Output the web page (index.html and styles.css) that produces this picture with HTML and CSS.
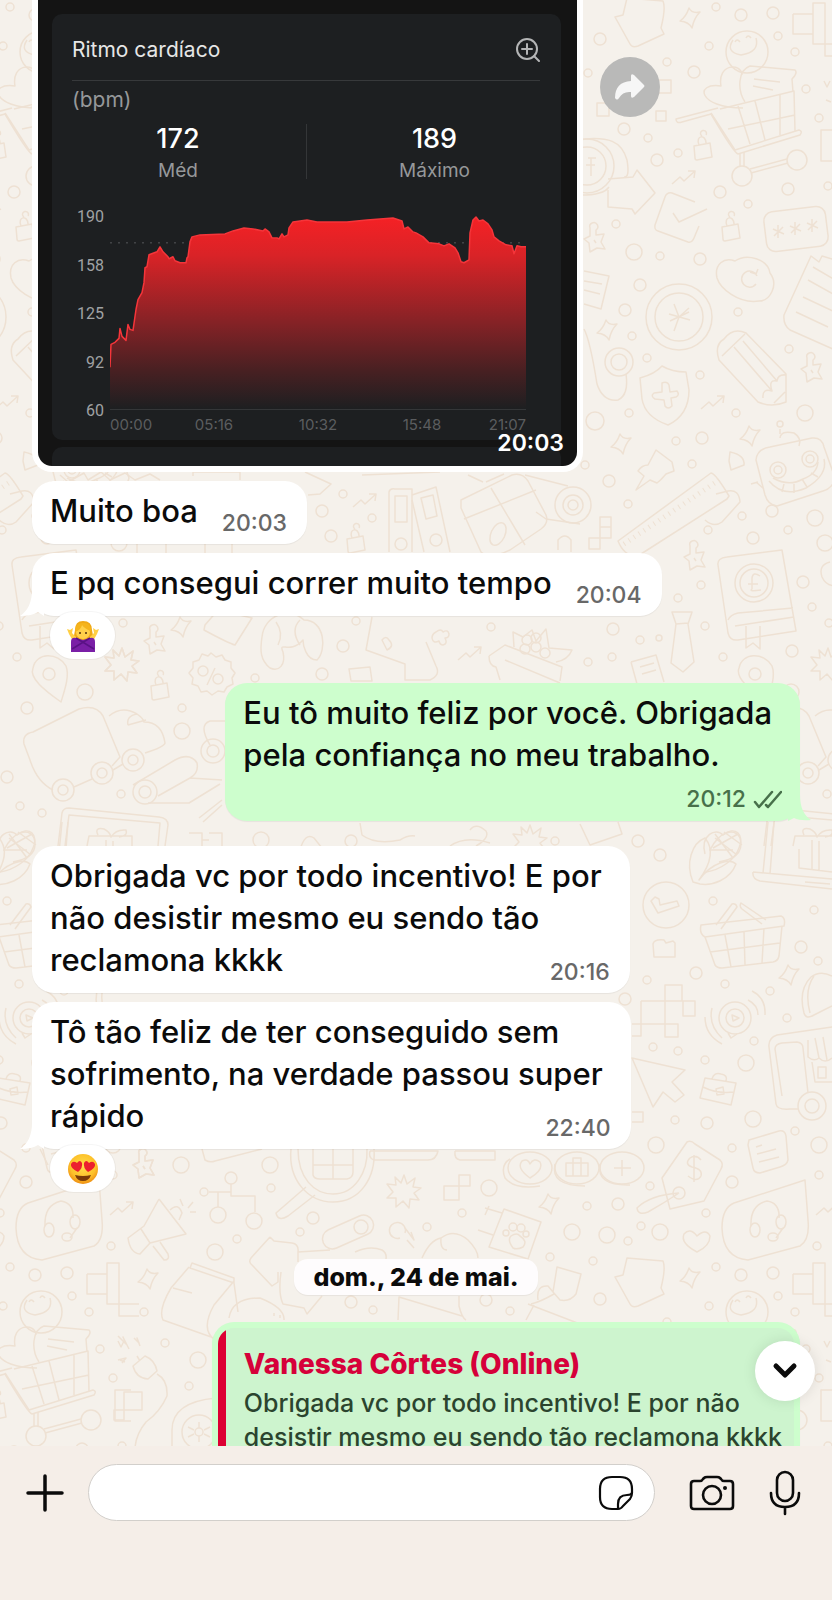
FILE: index.html
```html
<!DOCTYPE html>
<html lang="pt-BR">

<head>
    <meta charset="UTF-8" />
    <meta name="viewport" content="width=device-width, initial-scale=1" />
    <title>Conversa</title>
    <link rel="stylesheet" href="styles.css">
</head>

<body>
    <main class="chat">
        <!-- Wallpaper doodles, one tile repeated every 706 x 1260 -->
        <svg class="wallpaper" aria-hidden="true">
            <defs>
                <path id="spark" d="M-1-10Q2-4 10-6Q4 0 2 10Q-1 4-10 3Q-4-1-1-10Z" />
                <path id="lock" d="M-9-3L7-6L9 8L-6 11Q-8 11-8 9ZM-4-4C-8-14 3-15 3-6M-1-13a3 3 0 1 1 4-1" />
                <path id="zig" d="M-12 7L-4 0L0 4L11-6M4-6L11-6L10 1" />
                <path id="burst" d="M0-17L3-8L11-14L9-5L17-4L10 1L15 8L6 7L5 16L-1 9L-8 15L-8 6L-17 6L-11 0L-17-8L-8-7L-9-15L-3-9Z" />
                <path id="pawn" d="M-4-12a4 4 0 1 1 6 2L2-5L10-6L7 2L11 9L3 8L-4 12L-5 3L-10-1L-4-4ZM0 0L2 3" />
                <g id="tile">
                    <g class="dots">
                        <circle cx="716" cy="7" r="4" /><circle cx="741" cy="15" r="6" /><circle cx="773" cy="13" r="6" />
                        <circle cx="600" cy="39" r="6" /><circle cx="709" cy="46" r="4" /><circle cx="778" cy="36" r="4" />
                        <circle cx="795" cy="52" r="4" /><circle cx="667" cy="62" r="4" /><circle cx="694" cy="72" r="6" />
                        <circle cx="588" cy="73" r="4" /><circle cx="806" cy="89" r="4" /><circle cx="819" cy="118" r="4" />
                        <circle cx="624" cy="129" r="6" /><circle cx="648" cy="138" r="4" /><circle cx="678" cy="153" r="4" />
                        <circle cx="657" cy="160" r="6" /><circle cx="720" cy="192" r="6" /><circle cx="788" cy="189" r="6" />
                        <circle cx="828" cy="186" r="4" /><circle cx="748" cy="204" r="4" /><circle cx="616" cy="224" r="4" />
                        <circle cx="634" cy="252" r="8" /><circle cx="660" cy="256" r="4" /><circle cx="700" cy="259" r="6" />
                        <circle cx="640" cy="285" r="6" /><circle cx="625" cy="310" r="6" /><circle cx="738" cy="312" r="4" />
                        <circle cx="632" cy="336" r="4" /><circle cx="647" cy="358" r="4" /><circle cx="789" cy="349" r="4" />
                        <circle cx="700" cy="375" r="4" /><circle cx="629" cy="413" r="4" /><circle cx="736" cy="413" r="4" />
                        <circle cx="595" cy="421" r="9" /><circle cx="805" cy="413" r="8" /><circle cx="676" cy="441" r="4" />
                        <circle cx="702" cy="438" r="6" /><circle cx="692" cy="464" r="4" /><circle cx="585" cy="465" r="4" />
                        <circle cx="609" cy="481" r="6" /><circle cx="628" cy="504" r="4" /><circle cx="708" cy="530" r="4" />
                        <circle cx="742" cy="516" r="4" /><circle cx="753" cy="538" r="6" /><circle cx="788" cy="530" r="4" />
                        <circle cx="772" cy="511" r="6" /><circle cx="815" cy="518" r="8" /><circle cx="825" cy="543" r="8" />
                        <circle cx="803" cy="582" r="6" /><circle cx="812" cy="607" r="4" /><circle cx="829" cy="623" r="4" />
                        <circle cx="701" cy="585" r="4" /><circle cx="678" cy="598" r="4" /><circle cx="705" cy="626" r="4" />
                        <circle cx="640" cy="640" r="4" /><circle cx="659" cy="638" r="3" /><circle cx="613" cy="629" r="6" />
                        <circle cx="612" cy="657" r="4" /><circle cx="588" cy="662" r="4" /><circle cx="491" cy="627" r="4" />
                        <circle cx="792" cy="651" r="6" /><circle cx="723" cy="657" r="4" /><circle cx="733" cy="708" r="6" />
                        <circle cx="791" cy="692" r="8" /><circle cx="827" cy="794" r="4" /><circle cx="726" cy="806" r="4" />
                        <circle cx="748" cy="813" r="4" /><circle cx="713" cy="777" r="6" /><circle cx="343" cy="494" r="4" />
                        <circle cx="322" cy="511" r="6" /><circle cx="372" cy="518" r="4" /><circle cx="331" cy="536" r="6" />
                        <circle cx="182" cy="708" r="4" /><circle cx="182" cy="731" r="8" /><circle cx="255" cy="678" r="4" />
                        <circle cx="322" cy="674" r="6" /><circle cx="343" cy="646" r="6" /><circle cx="356" cy="621" r="4" />
                        <circle cx="261" cy="840" r="8" /><circle cx="351" cy="841" r="6" /><circle cx="555" cy="841" r="4" />
                        <circle cx="638" cy="841" r="6" /><circle cx="660" cy="855" r="6" /><circle cx="713" cy="901" r="4" />
                        <circle cx="814" cy="910" r="4" /><circle cx="801" cy="947" r="6" /><circle cx="818" cy="961" r="4" />
                        <circle cx="696" cy="973" r="6" /><circle cx="647" cy="980" r="4" /><circle cx="725" cy="984" r="4" />
                        <circle cx="770" cy="991" r="4" /><circle cx="787" cy="1018" r="4" /><circle cx="754" cy="1041" r="4" />
                        <circle cx="625" cy="999" r="6" /><circle cx="653" cy="1047" r="4" /><circle cx="678" cy="1051" r="4" />
                        <circle cx="705" cy="1060" r="4" /><circle cx="746" cy="1063" r="8" /><circle cx="707" cy="1123" r="6" />
                        <circle cx="753" cy="1119" r="8" /><circle cx="675" cy="1120" r="4" /><circle cx="656" cy="1145" r="8" />
                        <circle cx="732" cy="1148" r="4" /><circle cx="732" cy="1182" r="6" /><circle cx="795" cy="1131" r="4" />
                        <circle cx="819" cy="1145" r="8" /><circle cx="819" cy="1175" r="4" /><circle cx="650" cy="1186" r="4" />
                        <circle cx="489" cy="1188" r="8" /><circle cx="462" cy="1213" r="4" /><circle cx="587" cy="1206" r="4" />
                        <circle cx="618" cy="1204" r="6" /><circle cx="706" cy="1213" r="4" /><circle cx="181" cy="1165" r="8" />
                        <circle cx="270" cy="1165" r="8" /><circle cx="231" cy="1178" r="6" /><circle cx="271" cy="1188" r="4" />
                        <circle cx="218" cy="1215" r="8" /><circle cx="254" cy="1221" r="8" /><circle cx="313" cy="1218" r="6" />
                        <circle cx="204" cy="1192" r="4" /><circle cx="215" cy="1252" r="8" /><circle cx="237" cy="1239" r="4" />
                        <circle cx="300" cy="1232" r="4" /><circle cx="427" cy="1227" r="4" /><circle cx="572" cy="1232" r="8" />
                        <circle cx="607" cy="1235" r="8" /><circle cx="660" cy="1232" r="8" /><circle cx="628" cy="1241" r="4" />
                        <circle cx="641" cy="1226" r="4" /><circle cx="550" cy="1257" r="4" /><circle cx="593" cy="1261" r="4" />
                        <circle cx="817" cy="1246" r="4" /><circle cx="144" cy="1312" r="4" /><circle cx="165" cy="1343" r="4" />
                        <circle cx="198" cy="1360" r="8" /><circle cx="189" cy="1386" r="4" /><circle cx="351" cy="1302" r="6" />
                        <circle cx="373" cy="1310" r="4" /><circle cx="486" cy="1300" r="6" /><circle cx="510" cy="1311" r="4" />
                    </g>
                    <use href="#spark" x="690" y="18" /><use href="#spark" x="607" y="330" /><use href="#spark" x="621" y="444" />
                    <use href="#spark" x="750" y="436" /><use href="#spark" x="181" y="627" /><use href="#spark" x="789" y="975" />
                    <use href="#spark" x="549" y="1204" /><use href="#spark" x="148" y="1279" />
                    <use href="#lock" x="703" y="149" /><use href="#lock" x="731" y="230" /><use href="#lock" x="160" y="689" />
                    <use href="#lock" x="356" y="542" />
                    <use href="#zig" x="684" y="177" /><use href="#zig" x="713" y="402" /><use href="#zig" x="470" y="653" />
                    <use href="#zig" x="365" y="500" /><use href="#zig" x="828" y="1208" />
                    <use href="#burst" x="122" y="665" /><use href="#burst" x="828" y="665" />
                    <use href="#burst" x="404" y="1192" /><use href="#burst" x="530" y="842" />
                    <use href="#pawn" x="811" y="370" /><use href="#pawn" x="594" y="240" /><use href="#pawn" x="694" y="558" />
                    <use href="#pawn" x="154" y="642" /><use href="#pawn" x="143" y="1166" /><use href="#pawn" x="849" y="1166" />

                    <!-- arrows, blocks and the shopping cart -->
                    <path d="M627-2L663 1Q666 8 661 28L664 34L638 46Q632 48 630 44L615 17L623 15Z" />
                    <path d="M793 14H813V3H825V15M793 14V34H813V14M813 34V44H845M825 15V44V56H845" />
                    <circle cx="747" cy="52" r="21" /><path d="M733 40Q725 52 741 55Q760 52 756 38M735 42q2-4 5 0M746 38q2-4 5 0" />
                    <path d="M743 108C698 108 694 82 721 86C717 64 741 62 742 75M745 102C737 90 738 70 750 66L795 70Q798 73 792 79L793 92M754 79L780 82M753 86L773 90" />
                    <path d="M711 113L735 150M720 109L794 91L795 131M728 129L795 115M738 106L750 144M755 101L765 140M780 95V135" />
                    <path d="M735 150L799 130Q803 131 800 135L738 154Q734 153 711 114L682 122Q676 124 676 119L718 108" />
                    <path d="M740 153V167M744 152V167M751 173L788 163M750 169L787 159" /><circle cx="797" cy="160" r="10" /><circle cx="742" cy="176" r="10" />
                    <path d="M824 81l3 6l3-6M826 100l5 2M837 130H821V161H837M653 80H671V93H655M597 103H609V116H597ZM656 111H666V121H656Z" />
                    <path d="M575 140C610 135 622 142 627 160Q630 178 624 177M575 195C600 196 607 190 609 187" /><circle cx="587" cy="166" r="19" /><circle cx="587" cy="166" r="27" /><path d="M588 158h8M586 165h9M591 158v18" />
                    <path d="M608 190V207L632 209L635 214L655 193L637 170L633 177L608 179" />
                    <path d="M695 202L672 193Q667 192 665 197L655 225Q654 230 658 231L688 242Q692 243 694 238L699 226M673 213L679 222L707 209" />

                    <!-- password card, cloud, notes -->
                    <rect x="765" y="209" width="62" height="40" rx="9" transform="rotate(-7 796 229)" />
                    <path d="M778 225v13M773 229l11 5M783 227l-9 9M795 222v13M790 226l11 5M800 224l-9 9M812 219v13M807 223l11 5M817 221l-9 9" />
                    <path d="M717 278C714 264 724 257 735 261C747 253 768 259 770 273C779 285 770 301 759 301C738 304 720 288 717 278Z" /><path d="M757 276a8 8 0 1 0-1 8M750 272l6 2l2-5" />
                    <path d="M835 260L822 256L819 262L811 256L784 315Q783 325 790 330L835 350M813 267L835 280M808 280L835 295M803 297L835 312M796 312L828 327" />
                    <circle cx="679" cy="317" r="33" /><circle cx="679" cy="317" r="24" /><path d="M674 304L679 317L674 331M679 317L689 308M669 314L690 320M670 321L689 312" />
                    <path d="M584 271L609 276L601 309L584 304M584 281L602 284M584 290L600 294" />
                    <path d="M584 329Q590 340 597 384Q603 402 618 400Q629 395 626 374" /><circle cx="619" cy="362" r="14" /><circle cx="619" cy="362" r="8" />
                    <path d="M640 378Q655 374 662 366Q672 372 686 372L689 390Q689 415 668 425Q645 417 642 399Z" />
                    <path d="M662 383Q667 381 669 385L670 392L677 391Q680 395 676 397L671 398L672 406Q668 410 665 406L664 400L655 399Q650 396 654 393L662 392Z" />
                    <path d="M719 360Q714 345 724 339Q733 327 746 333L786 374V402Q772 408 758 402ZM722 356L745 334M734 347L772 391M743 341L777 381M763 398Q762 388 772 391Q768 379 777 381Q778 374 786 375M774 403L785 392" />
                    <path d="M729 461l1-9q15 3 14 13l-13 5Z" />

                    <!-- robot, pin and ruler -->
                    <path d="M780 438Q781 430 794 433Q802 438 799 446M780 429V434" /><circle cx="780" cy="424" r="3" />
                    <path d="M756 460Q757 449 770 447L812 438Q822 437 824 447L835 478Q833 488 823 491L777 506Q768 505 765 495ZM756 482L764 489M751 484L758 482" />
                    <circle cx="778" cy="470" r="8" /><circle cx="778" cy="470" r="4" /><circle cx="810" cy="459" r="8" /><circle cx="810" cy="459" r="4" />
                    <path d="M769 481Q783 498 806 488Q828 475 824 459M773 478Q789 487 803 479Q817 474 818 462M782 492l2-8M794 493v-9M807 487l-5-8M818 477l-7-4" />
                    <path d="M656 450L672 462L674 471L666 474Q661 480 657 483L650 480L636 490L644 476L638 471Q642 465 648 465Z" />
                    <path d="M618 541L711 473Q716 474 729 496L727 499L641 554Q626 560 618 541Z" /><path d="M624 544L719 480" stroke-dasharray="1 5" stroke-width="5" />

                    <!-- cabinet, gift and tape -->
                    <path d="M389 552V492Q390 488 395 489H412V552M395 496H407V522H395Z" /><circle cx="401" cy="544" r="6" />
                    <path d="M412 495L436 487L450 552M421 498L433 495L437 516L426 519ZM412 500L424 552" /><circle cx="436" cy="540" r="6" />
                    <path d="M461 500L512 475Q522 472 528 481L546 515Q549 523 541 529L510 550Q490 560 481 552L461 508ZM464 519L536 490M491 488L525 545M483 482L468 475M486 482L504 474" />
                    <ellipse cx="498" cy="534" rx="7" ry="12" transform="rotate(25 498 534)" />
                    <circle cx="573" cy="505" r="18" /><circle cx="573" cy="505" r="10" /><circle cx="573" cy="505" r="5" /><path d="M525 475L568 486M536 512L546 519L580 524" />
                    <path d="M600 517H611V538H600ZM589 538H600V549H589ZM600 527H611M558 550V540Q565 532 571 540V552" />
                    <path d="M193 476V472H240V480M60 475L68 482L84 473L88 480L101 472L110 480L125 473L135 480L150 474L160 480M305 472L331 484L320 494L308 495M362 475L440 472" />
                    <path d="M716 494L728 491Q739 489 740 502L722 522Q714 528 705 520M137 540V558M166 540V558M205 540V558M232 540V558" />

                    <!-- pound book, tie, eyeglass -->
                    <path d="M718 565Q717 558 727 557L782 550L796 631L738 640Q730 641 728 633ZM728 620Q730 615 738 613L793 608M735 626L794 617M746 626V648L753 643L760 649V626" />
                    <circle cx="754" cy="583" r="19" /><circle cx="754" cy="583" r="14" /><path d="M760 576q-7-5-8 2v11q-4 3 9 1M748 584h10" />
                    <path d="M672 612H692L688 624L694 662L683 672L671 663L676 624ZM676 624L688 623" />
                    <path d="M830 562Q818 565 822 577Q826 586 836 586" />
                    <path d="M631 662L656 655L664 682M631 662L637 684M640 667L654 663M642 674L656 670" />

                    <!-- percent, croissant, fruit -->
                    <path d="M205 625L218 610L252 618L235 645Q228 643 204 630Z" />
                    <path d="M262 637C264 615 290 606 304 620C325 620 327 650 317 660C306 660 303 645 303 640C290 655 278 640 283 652C286 665 279 672 270 668C260 660 260 650 262 637ZM276 622Q284 633 278 645M300 620Q290 630 300 645" />
                    <path d="M211 653l5 4l6-2l3 5l6 2l0 6l4 5l-3 5l1 6l-6 3l-3 5l-6-1l-6 4l-5-4l-6 1l-3-6l-6-2l1-6l-4-5l4-5l0-6l6-2l3-6l6 2Z" /><circle cx="203" cy="671" r="5" /><circle cx="218" cy="679" r="5" /><path d="M215 668L207 685" />
                    <path d="M372 617L366 650L405 664V680H430Q441 675 436 666L426 642" /><path d="M349 669L370 667L372 681H351ZM382 640q4-5 7 0q6 6-2 10Z" />
                    <path d="M436 632q5-4 7 0q5-3 6 2q0 4-4 4q3 6-2 7q-3 0-4-4q-6 3-7-3q0-4 4-6Z" />
                    <path d="M489 656L505 645L562 667L560 681M489 656Q489 666 496 667L500 680M505 660L560 683M514 647L513 632L523 637L532 630L536 641L546 629L549 648L572 650Q568 660 556 662" />
                    <circle cx="527" cy="640" r="5" /><circle cx="536" cy="647" r="5" /><circle cx="545" cy="653" r="5" /><circle cx="536" cy="638" r="5" /><circle cx="525" cy="649" r="5" />

                    <!-- location pin, truck, laptop -->
                    <path d="M767 702C750 690 735 678 739 668C742 652 764 652 772 666C776 676 770 692 767 702Z" /><circle cx="755" cy="674" r="6" />
                    <path d="M759 790Q743 782 736 760L730 744Q728 734 739 732L785 709Q802 704 809 716L826 757L818 766M780 787L798 779M819 770L829 764" />
                    <circle cx="769" cy="790" r="11" /><circle cx="769" cy="790" r="5" /><circle cx="808" cy="773" r="11" /><circle cx="808" cy="773" r="5" /><circle cx="839" cy="760" r="11" /><circle cx="839" cy="760" r="5" />
                    <path d="M815 716Q828 705 843 714M834 725Q832 716 843 714Q849 718 850 722Q868 722 871 743Q870 747 851 753M834 725L852 720" />
                    <circle cx="145" cy="792" r="12" /><circle cx="145" cy="792" r="6" /><circle cx="213" cy="751" r="12" /><circle cx="213" cy="751" r="6" />
                    <path d="M133 785L175 760Q190 752 197 763Q199 773 190 778L158 796M148 803H189L220 784M190 778L222 780M199 818L222 800M203 822L222 805" />
                    <path d="M210 745Q198 725 210 721H225" />
                    <path d="M764 846L768 813Q769 808 775 808L865 817Q874 818 874 825L871 846M771 846L775 815L866 823L864 846M793 846L795 836H838V846M804 835Q800 827 810 829Q816 832 817 837Q822 829 832 830Q834 836 825 837" />
                    <path d="M705 854C700 835 716 827 723 835C735 825 745 835 739 848C735 860 720 870 706 872M709 850L733 850M715 834L733 858" />
                    <path d="M189 833H202V848M209 833H222V848M202 840H209M360 823L362 835Q375 845 400 840Q408 835 415 836M300 850Q305 832 314 838L322 848M470 830Q476 822 486 831Q490 838 476 846M450 846Q465 835 490 843" />
                    <path d="M580 824L590 845L622 834L618 822" />

                    <!-- corn, laptop gift, check, basket -->
                    <path d="M693 882C685 863 692 843 705 838C715 850 710 865 699 880C712 862 730 858 736 864C730 880 712 886 700 884ZM710 850C720 830 735 828 740 838C745 855 730 860 719 862M715 838L737 855M724 832L742 845M713 848L738 834" />
                    <path d="M768 822L763 873M774 822L770 874M753 872L832 879M753 872Q752 879 760 881L832 889M805 882L830 884" />
                    <path d="M799 849V868L832 872M812 840V869M819 841V870" />
                    <circle cx="666" cy="905" r="23" /><path d="M651 901L655 897L659 899L660 905L677 901L679 906L658 913Z" />
                    <path d="M653 944Q654 939 664 940L666 943L673 941L675 943V957L654 957Z" />
                    <path d="M701 925L781 916Q786 918 784 926L705 937Q699 934 701 925ZM705 937L715 965Q717 968 722 968L773 962Q778 961 779 956L782 926M725 935L731 967M744 932L745 965M764 928L762 963M710 952L780 943" />
                    <path d="M716 925L732 904Q736 903 737 907L721 929M766 920L741 903Q739 906 742 909L762 924" />

                    <!-- cursor, speaker, case, van -->
                    <path d="M641 1001H682V985H665V1024M682 985V1001H695V1016H683V1001M641 1001V1024H678V1037H665V1024M632 1024H641V1036H632" />
                    <path d="M632 1058L685 1070L672 1082L684 1095L675 1102L663 1092L653 1107ZM632 1112H643V1122H632" />
                    <circle cx="735" cy="1018" r="16" /><circle cx="735" cy="1018" r="9" /><path d="M732 1015L739 1018L733 1021ZM728 1033L731 1038L737 1034M712 1008Q708 1025 722 1038M705 1017Q705 1035 722 1044M748 1000Q758 1005 758 1015M752 991Q766 998 765 1015" />
                    <path d="M705 1078L736 1083L731 1105L700 1098ZM703 1087Q717 1094 734 1092M712 1079Q714 1072 721 1074Q728 1075 726 1081M716 1089L723 1087L724 1094L717 1095Z" />
                    <path d="M832 976Q820 970 811 977Q798 990 804 1013Q806 1020 814 1015L832 1006M814 976Q804 990 810 1013" />
                    <path d="M832 1027L777 1035Q768 1038 769 1047L776 1104Q777 1110 790 1109H798M775 1049Q775 1044 782 1043L797 1042Q803 1043 803 1048L808 1093M775 1049L782 1096M808 1040V1057Q814 1062 819 1058Q825 1064 832 1058M815 1038L819 1058M823 1037L827 1060M812 1062L815 1082H832M818 1067H826V1078H818Z" />
                    <circle cx="812" cy="1106" r="14" /><circle cx="812" cy="1106" r="7" />
                    <path d="M749 1140L779 1131Q785 1130 786 1136L788 1160Q787 1165 780 1167L760 1173Q754 1173 753 1168L748 1145ZM756 1147L762 1145M757 1154L776 1149M759 1162L779 1157" />

                    <!-- price tag, reactions, headset -->
                    <path d="M687 1142Q691 1140 695 1144L720 1160Q724 1164 721 1169L704 1201L670 1209L662 1178Z" /><circle cx="679" cy="1193" r="6" /><path d="M701 1160q-5-6-11-2q-6 6 2 9q11 2 9 9q-4 7-13 0M694 1155v27M679 1193Q650 1195 637 1208Q638 1216 648 1212Q664 1203 679 1193" />
                    <ellipse cx="530" cy="1168" rx="22" ry="16" /><path d="M510 1159Q500 1165 505 1178Q515 1190 540 1186M530 1178Q516 1168 522 1161Q528 1158 530 1164Q534 1157 540 1162Q544 1170 530 1178Z" />
                    <ellipse cx="577" cy="1168" rx="22" ry="16" /><path d="M555 1164Q550 1186 585 1186M566 1163H588V1176H566ZM573 1163V1158H581V1163M573 1163V1176M581 1163V1176" />
                    <ellipse cx="622" cy="1168" rx="22" ry="16" /><path d="M600 1164Q596 1186 630 1185M622 1160V1176M614 1168H631" />
                    <path d="M370 1151H438Q436 1161 426 1160H374Q368 1158 370 1151M455 1151H495V1160H460Q454 1159 455 1151" />
                    <path d="M444 1186H459V1200H444ZM459 1175H470V1186H459ZM459 1186V1175" />
                    <path d="M805 1180L734 1203Q722 1208 722 1228Q723 1258 748 1260L800 1246Q810 1240 808 1220ZM751 1226Q750 1205 767 1201Q780 1203 779 1218" />
                    <ellipse cx="755" cy="1230" rx="5" ry="7" /><ellipse cx="781" cy="1222" rx="5" ry="7" /><ellipse cx="773" cy="1237" rx="5" ry="4" /><path d="M783 1228L776 1238" />

                    <!-- magnifier, tree nodes, megaphone -->
                    <path d="M291 1149C288 1180 308 1202 333 1202C360 1202 376 1178 374 1149M298 1149C298 1178 314 1194 333 1194C355 1194 368 1172 367 1149M306 1187L276 1213Q278 1222 288 1216L315 1195M313 1149V1175Q314 1179 320 1179H347Q353 1178 353 1172V1149M313 1165H353M333 1149V1179" />
                    <path d="M202 1149L205 1160Q210 1163 215 1161L262 1149M40 1149L48 1165M231 1184V1196H255V1212M209 1192H231M218 1192V1207" />
                    <path d="M159 1199L186 1234L150 1243M159 1199L144 1226L128 1238Q130 1253 140 1254L150 1243L141 1229M153 1246L164 1260Q170 1260 168 1254L160 1242M170 1210Q178 1202 182 1213L179 1220M180 1199L183 1206M193 1202L188 1208M190 1212H196" />
                    <rect x="321" y="1222" width="54" height="20" rx="10" transform="rotate(-24 348 1232)" /><circle cx="361" cy="1227" r="7" />
                    <path d="M270 1237L274 1241L292 1243Q299 1244 298 1252V1262M270 1237L251 1258Q248 1262 252 1265L272 1286L278 1282V1272M355 1252Q370 1245 382 1250Q387 1253 386 1259M298 1252L330 1250" />
                    <path d="M405 1228L414 1240L411 1232M400 1238a8 8 0 1 1 5-5M407 1240L414 1248M422 1258Q430 1240 441 1238Q454 1228 468 1240Q478 1250 478 1258M441 1238Q440 1250 447 1250" />
                    <path d="M504 1209L541 1222L528 1259L489 1247ZM502 1213L485 1208M489 1206L485 1215M493 1235L478 1230" /><path d="M513 1248q-6-8-2-12q6-4 9 0q8 5 3 11q-6 3-10 1Z" /><circle cx="506" cy="1233" r="3" /><circle cx="513" cy="1227" r="4" /><circle cx="521" cy="1228" r="4" /><circle cx="526" cy="1234" r="3" />
                    <path d="M697 1252Q680 1243 684 1234Q690 1227 697 1236Q706 1228 710 1236Q710 1246 697 1252Z" />

                    <!-- bottom strip -->
                    <path d="M192 1263L234 1278V1283L190 1268ZM189 1267L171 1288Q158 1310 163 1320L214 1338M173 1288L192 1293M234 1281L214 1305Q200 1330 215 1340M234 1283L238 1312" />
                    <path d="M229 1318Q232 1298 260 1298Q285 1308 284 1320M274 1313v3M280 1315v3M281 1272Q278 1294 283 1304L304 1308L307 1314L322 1296" />
                    <path d="M118 1336l8 8l-3-7l6 12M134 1338l5 5l-2-5l3 8M118 1360l8-2l-4 5M133 1366L145 1356Q155 1360 157 1371L148 1379Q136 1378 133 1366ZM137 1356L140 1361M157 1374Q168 1380 167 1396Q160 1412 146 1422Q136 1434 135 1448M124 1392H142V1410H124ZM114 1410H124V1420H114Z" />
                    <path d="M216 1398Q172 1402 172 1430V1446" /><circle cx="199" cy="1432" r="17" /><circle cx="199" cy="1432" r="4" /><path d="M199 1422v6M199 1436v6M188 1427l6 3M204 1434l6 3M210 1427l-6 3M194 1434l-6 3" />
                    <path d="M557 1267L581 1274L576 1294Q570 1302 560 1300L553 1292ZM554 1294Q540 1302 531 1304M538 1300Q536 1285 548 1286L553 1292M528 1304L580 1324M526 1320L534 1305M459 1296V1306Q462 1318 466 1320M398 1320L399 1297L462 1316" />
                </g>
            </defs>
            <use href="#tile" /><use href="#tile" x="-706" /><use href="#tile" y="1260" /><use href="#tile" x="-706" y="1260" />
        </svg>

        <!-- Heart rate picture -->
        <section class="row">
            <figure class="photo">
                <div class="card">
                    <div class="card-head">
                        <h2>Ritmo cardíaco</h2>
                        <svg width="24" height="24" viewBox="0 0 24 24" fill="none" stroke="#b4b5b6" stroke-width="2" stroke-linecap="round">
                            <circle cx="11" cy="11" r="10" />
                            <path d="M18 18l5 5M6 11h10M11 6v10" />
                        </svg>
                    </div>
                    <p class="unit">(bpm)</p>
                    <div class="stats">
                        <div class="stat"><strong>172</strong><span>Méd</span></div>
                        <div class="stat"><strong>189</strong><span>Máximo</span></div>
                    </div>
                    <div class="chart">
                        <div class="y-axis"><span>190</span><span>158</span><span>125</span><span>92</span><span>60</span></div>
                        <div class="plot">
                            <svg viewBox="0 0 416 196" preserveAspectRatio="none">
                                <defs>
                                    <linearGradient id="heat" x1="0" y1="0" x2="0" y2="1">
                                        <stop offset="0" stop-color="#f52125" />
                                        <stop offset="0.2" stop-color="#d92327" />
                                        <stop offset="0.55" stop-color="#852226" />
                                        <stop offset="0.8" stop-color="#482022" />
                                        <stop offset="1" stop-color="#1d1f21" />
                                    </linearGradient>
                                </defs>
                                <path d="M0 29H416" stroke="#55585a" stroke-width="1" stroke-dasharray="2 6" />
                                <path fill="url(#heat)" d="M0 196V154L1 131L5 129L9 125L10 115L12 123L16 127L18 111L20 116L23 117L26 96L28 86L32 79L34 69L35 54L37 53L39 41L47 38L50 33L53 38L58 43L59 45L63 43L65 47L70 49L76 49L77 44L78 43L80 28L82 23L90 21L115 20L123 17L134 14L143 15L153 17L155 15L159 18L162 24L167 24L169 25L172 20L174 23L178 21L179 14L183 8L197 6L207 8L223 8L237 8L257 6L283 4L292 7L294 15L298 13L303 18L306 19L313 23L319 29L329 30L334 32L339 30L345 34L348 39L351 48L354 49L359 46L360 19L363 6L366 3L369 7L373 6L378 10L382 16L384 23L389 27L396 31L402 32L404 40L407 32L411 33L416 33V196Z" />
                                <path fill="none" stroke="#f5353a" stroke-width="1.5" stroke-linejoin="round" d="M0 154L1 131L5 129L9 125L10 115L12 123L16 127L18 111L20 116L23 117L26 96L28 86L32 79L34 69L35 54L37 53L39 41L47 38L50 33L53 38L58 43L59 45L63 43L65 47L70 49L76 49L77 44L78 43L80 28L82 23L90 21L115 20L123 17L134 14L143 15L153 17L155 15L159 18L162 24L167 24L169 25L172 20L174 23L178 21L179 14L183 8L197 6L207 8L223 8L237 8L257 6L283 4L292 7L294 15L298 13L303 18L306 19L313 23L319 29L329 30L334 32L339 30L345 34L348 39L351 48L354 49L359 46L360 19L363 6L366 3L369 7L373 6L378 10L382 16L384 23L389 27L396 31L402 32L404 40L407 32L411 33L416 33" />
                            </svg>
                            <div class="x-axis"><span>00:00</span><span>05:16</span><span>10:32</span><span>15:48</span><span>21:07</span></div>
                        </div>
                    </div>
                </div>
                <div class="card next"></div>
                <time class="photo-time">20:03</time>
            </figure>
            <button class="forward" type="button" aria-label="Encaminhar">
                <svg width="30" height="28" viewBox="0 0 30 28" fill="#f6f6f6">
                    <path d="M16 3Q16 0 19 2L29 12Q30 13 29 14L19 24Q16 26 16 23V19Q8 18 4 25Q2 28 0 25Q0 9 16 8Z" />
                </svg>
            </button>
        </section>

        <article class="bubble line">
            <p>Muito boa</p>
            <time>20:03</time>
        </article>

        <article class="bubble line">
            <svg class="tail-left" width="24" height="26" viewBox="0 0 24 26"><path fill="#fff" d="M12 0Q12 18 0 26Q12 26 18 22L24 26V0Z" /></svg>
            <p>E pq consegui correr muito tempo</p>
            <time>20:04</time>
        </article>
        <div class="reaction">
            <svg width="32" height="32" viewBox="0 0 32 32" role="img" aria-label="Mulher gesticulando não">
                <path fill="#f0a916" d="M8 10Q8 1 16 1Q25 1 25 10L27 21H6Z" />
                <path fill="#ffcf45" d="M3 10l-3-1l2 5l4 7l4-3l-5-5l1-5zM29 10l3-1l-2 5l-4 7l-4-3l5-5l-1-5z" />
                <circle cx="16" cy="12" r="7" fill="#ffd04a" />
                <path fill="#f5b41c" d="M8 12Q8 2 16 3Q24 2 24 11Q18 9 15 5Q14 10 8 12Z" />
                <circle cx="13" cy="13" r="1" fill="#53300c" /><circle cx="19" cy="13" r="1" fill="#53300c" />
                <path fill="#7a1fa6" d="M4 32V22Q4 17 9 18L16 20L23 18Q28 17 28 22V32Z" />
                <path fill="none" stroke="#5a1285" stroke-width="1.5" d="M5 29L23 18M27 29L9 18" />
            </svg>
        </div>

        <article class="bubble sent">
            <svg class="tail-right" width="24" height="26" viewBox="0 0 24 26"><path fill="#cdfecd" d="M12 0Q12 18 23 25Q12 26 6 23L0 26V0Z" /></svg>
            <p>Eu tô muito feliz por você. Obrigada<br>pela confiança no meu trabalho.</p>
            <div class="status">
                <time>20:12</time>
                <svg width="29" height="19" viewBox="0 0 29 19" fill="none" stroke="#47704a" stroke-width="2.5" stroke-linecap="round" stroke-linejoin="round">
                    <path d="M2 12L6 17L19 2M13 15L15 17L28 2" />
                </svg>
            </div>
        </article>

        <article class="bubble block">
            <p>Obrigada vc por todo incentivo! E por<br>não desistir mesmo eu sendo tão<br>reclamona kkkk</p>
            <time>20:16</time>
        </article>

        <article class="bubble block">
            <svg class="tail-left" width="24" height="26" viewBox="0 0 24 26"><path fill="#fff" d="M12 0Q12 18 0 26Q12 26 18 22L24 26V0Z" /></svg>
            <p>Tô tão feliz de ter conseguido sem<br>sofrimento, na verdade passou super<br>rápido</p>
            <time>22:40</time>
        </article>
        <div class="reaction">
            <svg width="32" height="32" viewBox="0 0 32 32" role="img" aria-label="Olhos de coração">
                <defs>
                    <radialGradient id="face" cx="0.5" cy="0.4" r="0.6">
                        <stop offset="0" stop-color="#ffe04a" />
                        <stop offset="0.7" stop-color="#fdc02a" />
                        <stop offset="1" stop-color="#ee8e12" />
                    </radialGradient>
                </defs>
                <circle cx="16" cy="16" r="15" fill="url(#face)" />
                <path fill="#ec1f2f" d="M11 19Q3 15 4 11Q6 7 10 10Q13 6 15 10Q16 15 11 19ZM21 19Q29 15 28 11Q26 7 22 10Q19 6 17 10Q16 15 21 19Z" />
                <path fill="#7a3b08" d="M8 22Q16 24 24 22Q22 28 16 28Q10 28 8 22Z" />
            </svg>
        </div>

        <div class="date">dom., 24 de mai.</div>

        <article class="bubble sent reply">
            <blockquote class="quote">
                <h3>Vanessa Côrtes (Online)</h3>
                <p>Obrigada vc por todo incentivo! E por não<br>desistir mesmo eu sendo tão reclamona kkkk</p>
            </blockquote>
        </article>

        <button class="to-bottom" type="button" aria-label="Ir para o fim">
            <svg width="26" height="18" viewBox="0 0 26 18" fill="none" stroke="#0b0b0b" stroke-width="5" stroke-linecap="round" stroke-linejoin="round">
                <path d="M4 4L13 13L22 4" />
            </svg>
        </button>
    </main>

    <!-- Message composer -->
    <footer class="composer">
        <button class="icon" type="button" aria-label="Anexar">
            <svg width="38" height="38" viewBox="0 0 38 38" stroke="#0b0b0b" stroke-width="3.5" stroke-linecap="round"><path d="M19 2V36M2 19H36" /></svg>
        </button>
        <div class="field">
            <input type="text" aria-label="Mensagem">
            <button class="icon" type="button" aria-label="Figurinhas">
                <svg width="36" height="36" viewBox="0 0 36 36" fill="none" stroke="#0b0b0b" stroke-width="2.2" stroke-linejoin="round">
                    <path d="M21 34H14Q2 34 2 22V14Q2 2 14 2H22Q34 2 34 14V18Q34 21 32 24L25 31Q23 34 20 34V29Q20 20 29 20Q34 20 34 17" />
                </svg>
            </button>
        </div>
        <button class="icon camera" type="button" aria-label="Câmera">
            <svg width="46" height="36" viewBox="0 0 46 36" fill="none" stroke="#0b0b0b" stroke-width="2.6" stroke-linejoin="round">
                <path d="M5 6H11Q13 6 14 4L15 3Q16 2 18 2H28Q30 2 31 3L32 4Q33 6 35 6H41Q44 6 44 9V31Q44 34 41 34H5Q2 34 2 31V9Q2 6 5 6Z" />
                <circle cx="23" cy="20" r="9" /><circle cx="36" cy="13" r="2" fill="#0b0b0b" stroke="none" />
            </svg>
        </button>
        <button class="icon" type="button" aria-label="Gravar áudio">
            <svg width="32" height="46" viewBox="0 0 32 46" fill="none" stroke="#0b0b0b" stroke-width="2.6" stroke-linecap="round">
                <rect x="8" y="2" width="16" height="29" rx="8" />
                <path d="M2 23Q2 37 16 37Q30 37 30 23M16 37V44" />
            </svg>
        </button>
    </footer>
</body>

</html>
```
FILE: styles.css
```css
/* Reset & Global Styles */
* {
    margin: 0;
    padding: 0;
    box-sizing: border-box;
}

body {
    display: flex;
    flex-direction: column;
    height: 100vh;
    background: #f5efe9;
    color: #0b0b0b;
    font-family: Inter, "Liberation Sans", sans-serif;
}

button {
    border: none;
    background: none;
    cursor: pointer;
}

svg {
    display: block;
}

/* Chat area */
.chat {
    position: relative;
    flex: 1;
    min-height: 0;
    overflow: hidden;
    display: flex;
    flex-direction: column;
    align-items: flex-start;
    padding: 0 32px;
    background: #f5f1eb;
}

.chat > * {
    flex-shrink: 0;
}

.wallpaper {
    position: absolute;
    inset: 0;
    width: 100%;
    height: 100%;
    fill: none;
    stroke: #eee1d3;
    stroke-width: 1.5;
    stroke-linejoin: round;
}

/* Heart rate picture */
.row {
    display: flex;
    align-items: flex-start;
    gap: 17px;
}

.photo {
    position: relative;
    width: 551px;
    border: 6px solid #fff;
    border-top: none;
    border-radius: 0 0 20px 20px;
    padding: 14px 16px 0 14px;
    background: #141414;
    overflow: hidden;
}

.card {
    padding: 0 21px 0 20px;
    height: 426px;
    border-radius: 10px;
    background: #1d1f21;
}

.card.next {
    margin-top: 7px;
    height: 19px;
    border-radius: 10px 10px 0 0;
}

.card-head {
    display: flex;
    justify-content: space-between;
    align-items: center;
    height: 67px;
    padding-top: 5px;
    border-bottom: 1px solid #37393b;
}

.card-head h2 {
    font-size: 21px;
    font-weight: 400;
    color: #e6e6e6;
}

.unit {
    line-height: 38px;
    font-size: 21px;
    color: #96989a;
}

.stats {
    display: grid;
    grid-template-columns: 1fr 1fr;
    margin: 5px -22px 0;
}

.stat {
    display: flex;
    flex-direction: column;
    align-items: center;
    height: 55px;
}

.stat + .stat {
    border-left: 1px solid #343638;
}

.stat strong {
    line-height: 29px;
    font-size: 27px;
    font-weight: 500;
    color: #fff;
}

.stat span {
    line-height: 36px;
    font-size: 19px;
    color: #96989a;
}

.chart {
    display: flex;
    gap: 6px;
    margin-top: 30px;
    padding-right: 14px;
}

.y-axis {
    display: flex;
    flex-direction: column;
    justify-content: space-between;
    width: 32px;
    height: 210px;
    line-height: 16px;
    text-align: right;
    font-family: Roboto, sans-serif;
    font-size: 16px;
    color: #a0a2a4;
}

.plot {
    flex: 1;
    padding-top: 5px;
}

.plot svg {
    width: 100%;
    height: 196px;
    border-bottom: 1px solid #343638;
}

.x-axis {
    display: grid;
    grid-template-columns: 1fr 2fr 2fr 2fr 1fr;
    padding-top: 7px;
    line-height: 16px;
    text-align: center;
    font-size: 15px;
    color: #5b5d5f;
}

.x-axis span:first-child {
    text-align: left;
}

.x-axis span:last-child {
    text-align: right;
}

.photo-time {
    position: absolute;
    right: 13px;
    bottom: 14px;
    line-height: 18px;
    font-size: 23px;
    font-weight: 600;
    color: #fff;
}

.forward {
    position: relative;
    display: flex;
    justify-content: center;
    align-items: center;
    width: 60px;
    height: 60px;
    margin-top: 57px;
    border-radius: 50%;
    background: #b9b9b8;
}

/* Message bubbles */
.bubble {
    position: relative;
    margin-top: 9px;
    padding: 9px 20px 12px 18px;
    border-radius: 22px;
    background: #fff;
    box-shadow: 0 1px 1px rgba(0, 0, 0, 0.06);
    font-size: 31px;
    font-weight: 500;
    line-height: 42px;
    white-space: nowrap;
}

.bubble time {
    margin-bottom: -4px;
    line-height: 26px;
    font-size: 23px;
    color: #686868;
}

.line {
    display: flex;
    align-items: flex-end;
    gap: 24px;
}

.block {
    display: grid;
}

.block p,
.block time {
    grid-area: 1 / 1;
}

.block p {
    padding-right: 8px;
}

.block time {
    align-self: end;
    justify-self: end;
}

.tail-left {
    position: absolute;
    left: -12px;
    bottom: 0;
}

.tail-right {
    position: absolute;
    right: -12px;
    bottom: 0;
}

.sent {
    align-self: flex-end;
    margin-top: 24px;
    padding: 9px 18px;
    background: #cdfecd;
}

.sent p {
    padding-right: 10px;
}

.sent + .bubble {
    margin-top: 25px;
}

.status {
    display: flex;
    justify-content: flex-end;
    align-items: center;
    gap: 7px;
    padding-top: 10px;
}

.bubble .status time {
    margin: 0;
    color: #47704a;
}

.reaction {
    position: relative;
    display: flex;
    justify-content: center;
    align-items: center;
    width: 65px;
    height: 47px;
    margin: -4px 0 0 18px;
    border-radius: 24px;
    background: #fff;
    box-shadow: 0 0 0 1px rgba(0, 0, 0, 0.04);
}

.date {
    position: relative;
    align-self: center;
    margin-top: 67px;
    padding: 0 19px;
    border-radius: 14px;
    background: #fefcfd;
    box-shadow: 0 1px 1px rgba(0, 0, 0, 0.06);
    line-height: 36px;
    font-size: 25px;
    font-weight: 800;
}

/* Quoted reply, cut off by the composer */
.reply {
    margin-top: 27px;
    padding: 6px;
}

.quote {
    padding: 16px 12px 12px 26px;
    border-radius: 16px;
    background: linear-gradient(to right, #dc0033 8px, #cdf4ce 8px);
}

.quote h3 {
    margin-bottom: 2px;
    line-height: 40px;
    font-size: 28px;
    font-weight: 800;
    color: #d6003a;
}

.quote p {
    padding: 0;
    line-height: 34px;
    font-size: 25px;
    color: #2b442e;
}

.to-bottom {
    position: absolute;
    right: 17px;
    bottom: 45px;
    display: flex;
    justify-content: center;
    align-items: center;
    width: 60px;
    height: 60px;
    border-radius: 50%;
    background: #fff;
    box-shadow: 0 0 14px rgba(0, 0, 0, 0.1);
}

/* Message composer */
.composer {
    display: flex;
    align-items: center;
    gap: 24px;
    padding: 18px 31px 79px 26px;
    background: #f5eee8;
}

.field {
    flex: 1;
    display: flex;
    align-items: center;
    height: 57px;
    padding: 0 20px 0 24px;
    border: 1px solid #d2cfcb;
    border-radius: 29px;
    background: #fff;
}

.field input {
    flex: 1;
    min-width: 0;
    border: none;
    outline: none;
    background: none;
    font: inherit;
    font-size: 28px;
}

.camera {
    margin: 0 10px;
}
```
